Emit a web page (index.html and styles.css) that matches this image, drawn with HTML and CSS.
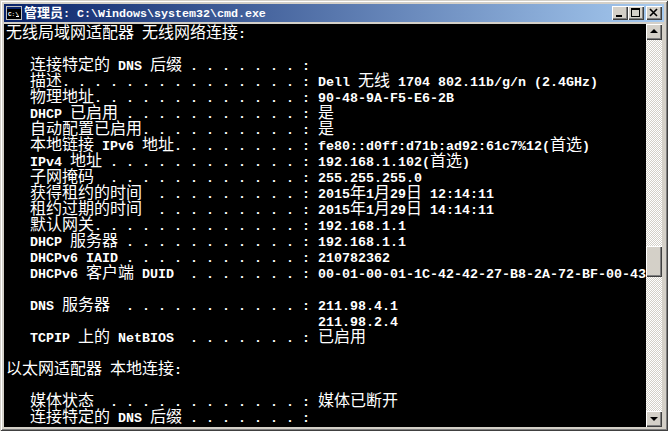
FILE: index.html
```
<!DOCTYPE html>
<html lang="zh-CN">
<head>
<meta charset="utf-8">
<title>cmd</title>
<link rel="stylesheet" href="styles.css">
</head>
<body>
<div class="window">
  <div class="titlebar">
    <svg class="appicon" width="16" height="14" viewBox="0 0 16 14"><rect width="16" height="14" fill="#d4d0c8"/><rect x="0.5" y="0.5" width="15" height="13" fill="#000" stroke="#c0c0c0"/><rect x="1" y="1" width="14" height="2" fill="#0a246a"/><text x="2" y="10" class="icontext">C:\</text><rect x="10" y="10" width="3" height="1" fill="#fff"/></svg>
    <div class="titletext"><span class="tc">管理员</span>: C:\Windows\system32\cmd.exe</div>
    <div class="caption">
      <button class="cbtn"><svg width="12" height="10" viewBox="0 0 12 10"><rect x="2" y="7" width="6" height="2" fill="#000"/></svg></button>
      <button class="cbtn"><svg width="12" height="10" viewBox="0 0 12 10"><path d="M1 0h9v9H1z M2 2v6h7V2z" fill="#000" fill-rule="evenodd"/></svg></button>
      <button class="cbtn close"><svg width="12" height="10" viewBox="0 0 12 10"><path d="M2 1l7 7M9 1L2 8" stroke="#000" stroke-width="1.6" fill="none"/></svg></button>
    </div>
  </div>
  <div class="body">
    <div class="console">
<div class="line"><span class="c">无线局域网适配器</span> <span class="c">无线网络连接</span>:</div>
<div class="line"></div>
<div class="line">   <span class="c">连接特定的</span> DNS <span class="c">后缀</span> . . . . . . . :</div>
<div class="line">   <span class="c">描述</span>. . . . . . . . . . . . . . . : Dell <span class="c">无线</span> 1704 802.11b/g/n (2.4GHz)</div>
<div class="line">   <span class="c">物理地址</span>. . . . . . . . . . . . . : 90-48-9A-F5-E6-2B</div>
<div class="line">   DHCP <span class="c">已启用</span> . . . . . . . . . . . : <span class="c">是</span></div>
<div class="line">   <span class="c">自动配置已启用</span>. . . . . . . . . . : <span class="c">是</span></div>
<div class="line">   <span class="c">本地链接</span> IPv6 <span class="c">地址</span>. . . . . . . . : fe80::d0ff:d71b:ad92:61c7%12(<span class="c">首选</span>)</div>
<div class="line">   IPv4 <span class="c">地址</span> . . . . . . . . . . . . : 192.168.1.102(<span class="c">首选</span>)</div>
<div class="line">   <span class="c">子网掩码</span>  . . . . . . . . . . . . : 255.255.255.0</div>
<div class="line">   <span class="c">获得租约的时间</span>  . . . . . . . . . : 2015<span class="c">年</span>1<span class="c">月</span>29<span class="c">日</span> 12:14:11</div>
<div class="line">   <span class="c">租约过期的时间</span>  . . . . . . . . . : 2015<span class="c">年</span>1<span class="c">月</span>29<span class="c">日</span> 14:14:11</div>
<div class="line">   <span class="c">默认网关</span>. . . . . . . . . . . . . : 192.168.1.1</div>
<div class="line">   DHCP <span class="c">服务器</span> . . . . . . . . . . . : 192.168.1.1</div>
<div class="line">   DHCPv6 IAID . . . . . . . . . . . : 210782362</div>
<div class="line">   DHCPv6 <span class="c">客户端</span> DUID  . . . . . . . : 00-01-00-01-1C-42-42-27-B8-2A-72-BF-00-43</div>
<div class="line"></div>
<div class="line">   DNS <span class="c">服务器</span>  . . . . . . . . . . . : 211.98.4.1</div>
<div class="line">                                       211.98.2.4</div>
<div class="line">   TCPIP <span class="c">上的</span> NetBIOS  . . . . . . . : <span class="c">已启用</span></div>
<div class="line"></div>
<div class="line"><span class="c">以太网适配器</span> <span class="c">本地连接</span>:</div>
<div class="line"></div>
<div class="line">   <span class="c">媒体状态</span>  . . . . . . . . . . . . : <span class="c">媒体已断开</span></div>
<div class="line">   <span class="c">连接特定的</span> DNS <span class="c">后缀</span> . . . . . . . :</div>
    </div>
    <div class="scrollbar">
      <button class="sbtn"><svg width="16" height="16" viewBox="0 0 16 16"><path d="M8 5l4 4H4z" fill="#000"/></svg></button>
      <div class="track"><div class="thumb"></div></div>
      <button class="sbtn"><svg width="16" height="16" viewBox="0 0 16 16"><path d="M4 6h8l-4 4z" fill="#000"/></svg></button>
    </div>
  </div>
</div>
</body>
</html>
```
FILE: styles.css
```
* { box-sizing: border-box; }
html, body { margin: 0; padding: 0; width: 668px; height: 431px; overflow: hidden; background: #d4d0c8; }
.window {
  width: 668px; height: 431px;
  display: flex; flex-direction: column;
  background: #d4d0c8;
  padding: 4px;
  box-shadow: inset 1px 1px 0 #d4d0c8, inset -1px -1px 0 #404040, inset 2px 2px 0 #fff, inset -2px -2px 0 #808080;
}
.titlebar {
  height: 18px; flex: none;
  display: flex; align-items: center;
  padding: 0 2px 0 2px;
  background: linear-gradient(90deg, #0a246a, #a6caf0);
  color: #fff;
}
.appicon { flex: none; margin-right: 2px; }
.icontext { font: bold 6px "Liberation Mono", monospace; fill: #fff; }
.titletext {
  flex: 1; white-space: pre;
  font: bold 11.667px/18px "Liberation Mono", monospace;
}
.tc { font: bold 13px/18px "Noto Sans CJK SC", sans-serif; }
.caption { display: flex; flex: none; }
.cbtn, .sbtn {
  padding: 0; border: 0; margin: 0;
  display: flex; align-items: center; justify-content: center;
  background: #d4d0c8;
  box-shadow: inset 1px 1px 0 #fff, inset -1px -1px 0 #404040, inset -2px -2px 0 #808080;
}
.cbtn { width: 16px; height: 14px; }
.close { margin-left: 2px; }
.body { flex: 1; min-height: 0; display: flex; margin-top: 2px; }
.console {
  width: 642px; flex: none;
  background: #000; color: #fff;
  padding: 0 0 0 2px;
  overflow: hidden;
  font: bold 13.333px/14px "Liberation Mono", monospace;
}
.line { height: 16px; white-space: pre; }
.line::before { content: ""; font: 400 16px/14px "Noto Sans CJK SC", sans-serif; }
.c { font: 400 16px/14px "Noto Sans CJK SC", sans-serif; }
.scrollbar { width: 16px; flex: none; display: flex; flex-direction: column; }
.sbtn { width: 16px; height: 16px; flex: none; }
.track {
  flex: 1; min-height: 0;
  display: flex; flex-direction: column;
  padding-top: 206px;
  background: repeating-conic-gradient(#d4d0c8 0 25%, #fff 0 50%) 0 0 / 2px 2px;
}
.thumb {
  height: 31px; flex: none;
  background: #d4d0c8;
  box-shadow: inset 1px 1px 0 #fff, inset -1px -1px 0 #404040, inset -2px -2px 0 #808080;
}
```
